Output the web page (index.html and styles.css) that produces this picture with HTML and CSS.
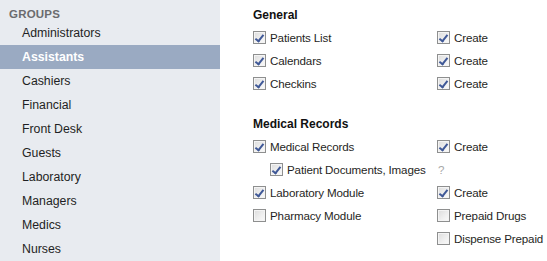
FILE: index.html
```html
<!DOCTYPE html>
<html>
<head>
<meta charset="utf-8">
<link rel="stylesheet" href="styles.css">
</head>
<body>
<div class="app">
  <aside class="sidebar">
    <div class="sidebar-title">GROUPS</div>
    <ul class="groups">
      <li class="group">Administrators</li>
      <li class="group selected">Assistants</li>
      <li class="group">Cashiers</li>
      <li class="group">Financial</li>
      <li class="group">Front Desk</li>
      <li class="group">Guests</li>
      <li class="group">Laboratory</li>
      <li class="group">Managers</li>
      <li class="group">Medics</li>
      <li class="group">Nurses</li>
    </ul>
  </aside>
  <main class="content">
    <section class="section">
      <h2 class="section-title">General</h2>
      <div class="perm-grid">
        <label class="perm"><span class="cb checked"></span>Patients List</label>
        <label class="perm"><span class="cb checked"></span>Create</label>
        <label class="perm"><span class="cb checked"></span>Calendars</label>
        <label class="perm"><span class="cb checked"></span>Create</label>
        <label class="perm"><span class="cb checked"></span>Checkins</label>
        <label class="perm"><span class="cb checked"></span>Create</label>
      </div>
    </section>
    <section class="section section-gap">
      <h2 class="section-title">Medical Records</h2>
      <div class="perm-grid">
        <label class="perm"><span class="cb checked"></span>Medical Records</label>
        <label class="perm"><span class="cb checked"></span>Create</label>
        <label class="perm sub"><span class="cb checked"></span>Patient Documents, Images</label>
        <span class="perm help">?</span>
        <label class="perm"><span class="cb checked"></span>Laboratory Module</label>
        <label class="perm"><span class="cb checked"></span>Create</label>
        <label class="perm"><span class="cb"></span>Pharmacy Module</label>
        <label class="perm"><span class="cb"></span>Prepaid Drugs</label>
        <span class="perm"></span>
        <label class="perm"><span class="cb"></span>Dispense Prepaid</label>
      </div>
    </section>
  </main>
</div>
</body>
</html>
```
FILE: styles.css
```css
* { box-sizing: border-box; }
html, body { margin: 0; padding: 0; background: #ffffff; }
body {
  font-family: "Liberation Sans", Arial, sans-serif;
  font-size: 12px;
  color: #1f1f24;
  width: 547px;
  height: 261px;
  overflow: hidden;
}
.app { display: flex; height: 261px; }
.sidebar {
  width: 220px;
  flex: none;
  background: #e8ebf0;
  height: 100%;
}
.sidebar-title {
  height: 21px;
  padding: 8px 0 0 9px;
  font-size: 11.5px;
  font-weight: bold;
  color: #6b6b6e;
  line-height: 13px;
  letter-spacing: 0.2px;
}
.groups { list-style: none; margin: 0; padding: 0; }
.group {
  height: 24px;
  line-height: 23px;
  padding: 1px 0 0 22px;
  color: #1f1f24;
  font-size: 12.3px;
}
.group.selected {
  background: #9aaac2;
  color: #ffffff;
  font-weight: bold;
}
.content {
  flex: 1;
  padding: 4px 0 0 33px;
  font-size: 11.6px;
  letter-spacing: -0.15px;
}
.section-title {
  margin: 0;
  height: 22px;
  line-height: 22px;
  font-size: 12px;
  font-weight: bold;
  color: #111;
  letter-spacing: 0;
}
.section-gap { margin-top: 18px; }
.perm-grid {
  display: grid;
  grid-template-columns: 184px auto;
  grid-auto-rows: 23px;
}
.perm {
  display: flex;
  align-items: center;
  gap: 4px;
  white-space: nowrap;
}
.perm.sub { padding-left: 17px; }
.help { color: #a8a8a8; padding-left: 1px; }
.cb {
  width: 13px;
  height: 13px;
  flex: none;
  border: 1px solid #8e8f8f;
  background: linear-gradient(135deg, #dcdcdc 0%, #f0f0f0 60%, #fafafa 100%);
  box-shadow: inset 0 0 0 1px #f4f4f4;
  position: relative;
}
.cb.checked::after {
  content: "";
  position: absolute;
  left: 3px;
  top: 1px;
  width: 3px;
  height: 7px;
  border: solid #3f5897;
  border-width: 0 2px 2px 0;
  transform: rotate(38deg);
}
```
